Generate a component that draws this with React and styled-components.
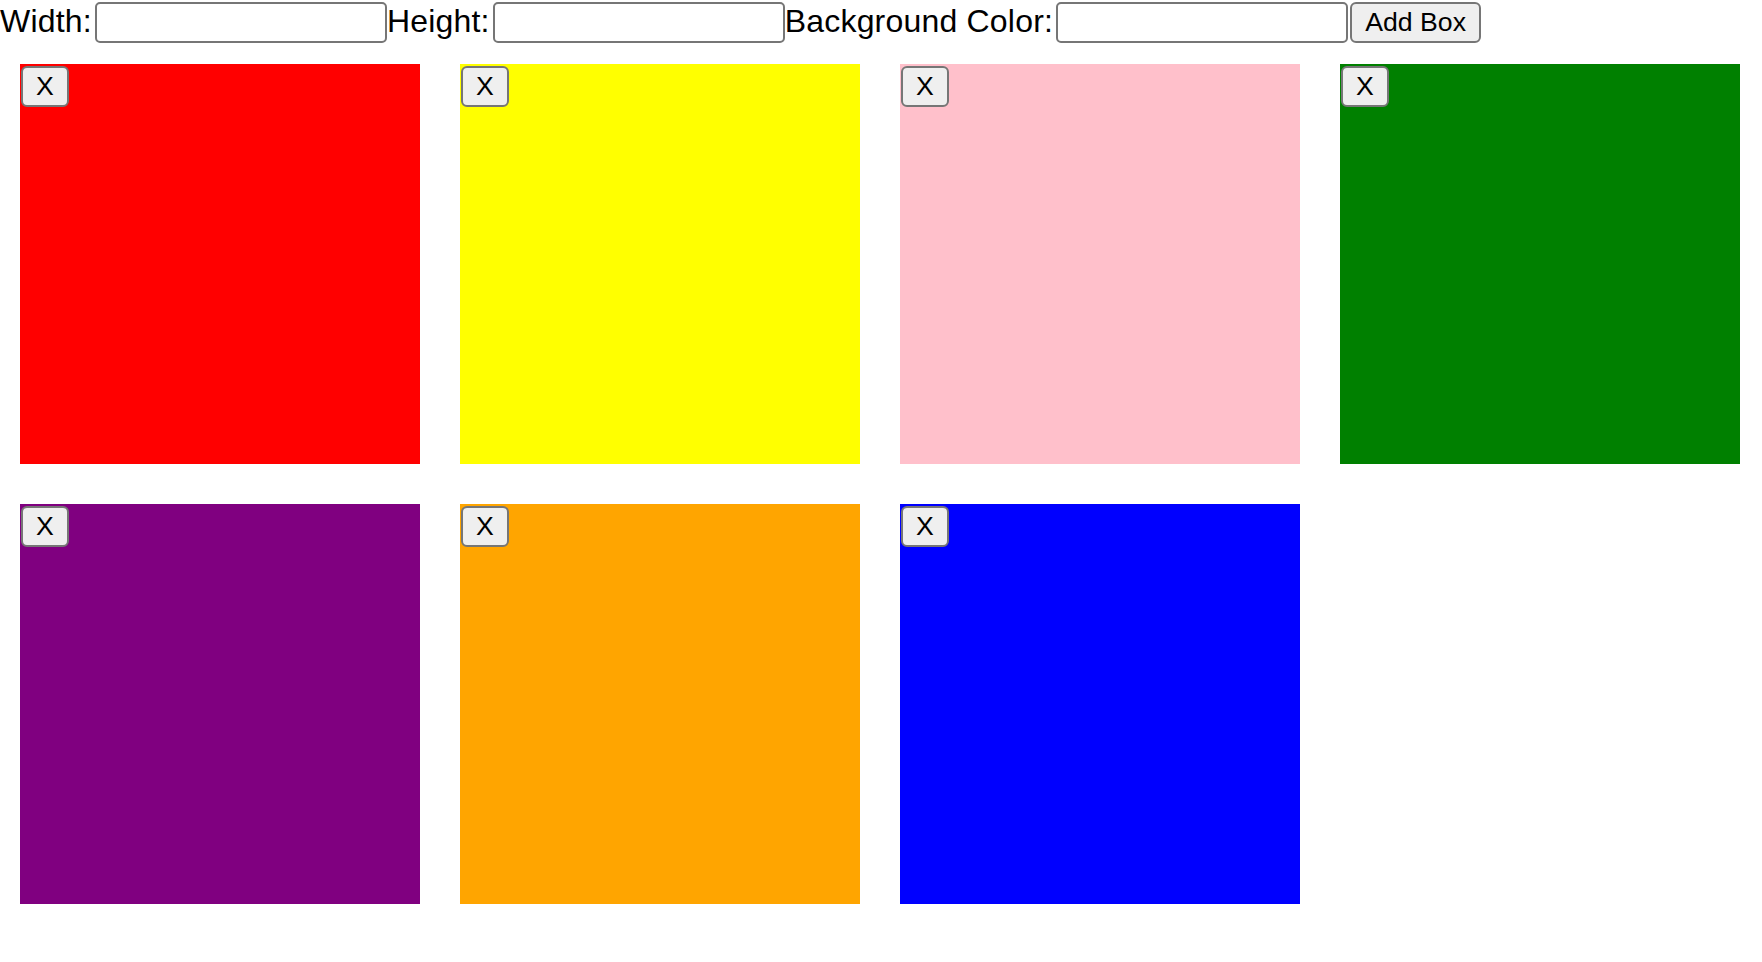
import React, { useState } from 'react'
import styled, { createGlobalStyle } from 'styled-components'

const GlobalStyle = createGlobalStyle`
  body {
    margin: 0;
    background: #ffffff;
    font-family: "Liberation Sans", Arial, Helvetica, sans-serif;
    color: #000000;
  }
`

const Form = styled.form`
  display: flex;
  align-items: center;
  height: 44px;
  padding-top: 1px;
  box-sizing: border-box;
`

const Label = styled.label`
  font-size: 32px;
  line-height: 37px;
  letter-spacing: 0.2px;
  padding-right: 3px;
  margin-top: -3px;
  white-space: nowrap;
`

const Input = styled.input`
  width: 292px;
  height: 41px;
  box-sizing: border-box;
  margin: 0;
  padding: 2px 4px;
  font-family: inherit;
  font-size: 26.67px;
  background: #ffffff;
  border: 2px solid #767676;
  border-radius: 5px;
  outline: none;
`

const Button = styled.button`
  height: 41px;
  box-sizing: border-box;
  margin: 0;
  padding: 2px 12px;
  font-family: inherit;
  font-size: 26.67px;
  line-height: 1;
  color: #000000;
  background: #efefef;
  border: 2px solid #767676;
  border-radius: 6px;
`

const AddButton = styled(Button)`
  width: 131px;
  margin-left: 2px;
`

const CloseButton = styled(Button)`
  width: 48px;
  margin: 2px 0 0 1px;
  padding: 2px 0;
`

const Grid = styled.div`
  display: flex;
  flex-wrap: wrap;
`

const Box = styled.div`
  display: flex;
  align-items: flex-start;
  width: 400px;
  height: 400px;
  margin: 20px;
  background-color: ${(p) => p.$color};
`

const initialBoxes = [
  { id: 1, color: 'red' },
  { id: 2, color: 'yellow' },
  { id: 3, color: 'pink' },
  { id: 4, color: 'green' },
  { id: 5, color: 'purple' },
  { id: 6, color: 'orange' },
  { id: 7, color: 'blue' },
]

export default function App() {
  const [boxes, setBoxes] = useState(initialBoxes)

  return (
    <>
      <GlobalStyle />
      <Form onSubmit={(e) => e.preventDefault()}>
        <Label htmlFor="width">Width:</Label>
        <Input id="width" type="text" />
        <Label htmlFor="height">Height:</Label>
        <Input id="height" type="text" />
        <Label htmlFor="color">Background Color:</Label>
        <Input id="color" type="text" />
        <AddButton type="submit">Add Box</AddButton>
      </Form>
      <Grid>
        {boxes.map((box) => (
          <Box key={box.id} $color={box.color}>
            <CloseButton onClick={() => setBoxes(boxes.filter((b) => b.id !== box.id))}>
              X
            </CloseButton>
          </Box>
        ))}
      </Grid>
    </>
  )
}
